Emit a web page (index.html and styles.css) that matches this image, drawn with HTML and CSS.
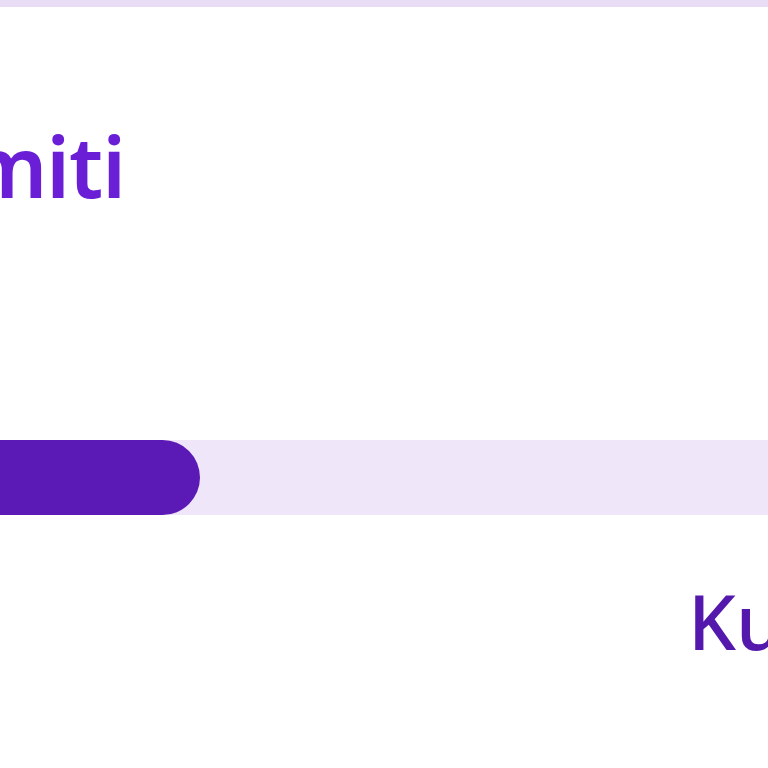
FILE: index.html
```html
<!DOCTYPE html>
<html>
<head>
<meta charset="utf-8">
<link rel="stylesheet" href="styles.css">
</head>
<body>
<div class="card">
  <div class="title-row"><span class="title">Limiti</span></div>
  <div class="track"><div class="fill" style="width:200px"></div></div>
  <div class="label-row"><span class="label">Kuota</span></div>
</div>
</body>
</html>
```
FILE: styles.css
```css
html, body {
  margin: 0;
  padding: 0;
  background: #ffffff;
  overflow: hidden;
  width: 768px;
  height: 768px;
}
.card {
  border-top: 7px solid #e9ddf6;
  font-family: "Noto Sans", "Open Sans", sans-serif;
  width: 768px;
  height: 761px;
  overflow: hidden;
}
.title-row {
  width: 125px;
  display: flex;
  justify-content: flex-end;
  margin-top: 99px;
  height: 120px;
  line-height: 120px;
}
.title {
  font-size: 84px;
  font-weight: 600;
  color: #6a1fd6;
  white-space: nowrap;
  letter-spacing: -1px;
}
.track {
  margin-top: 214px;
  height: 75px;
  width: 900px;
  background: #efe6f9;
}
.fill {
  height: 75px;
  background: #5b1ab5;
  border-radius: 0 38px 38px 0;
}
.label-row {
  margin-top: 46px;
  padding-left: 688px;
  height: 120px;
  line-height: 120px;
}
.label {
  font-size: 76px;
  font-weight: 500;
  color: #5418ad;
  white-space: nowrap;
}
```
